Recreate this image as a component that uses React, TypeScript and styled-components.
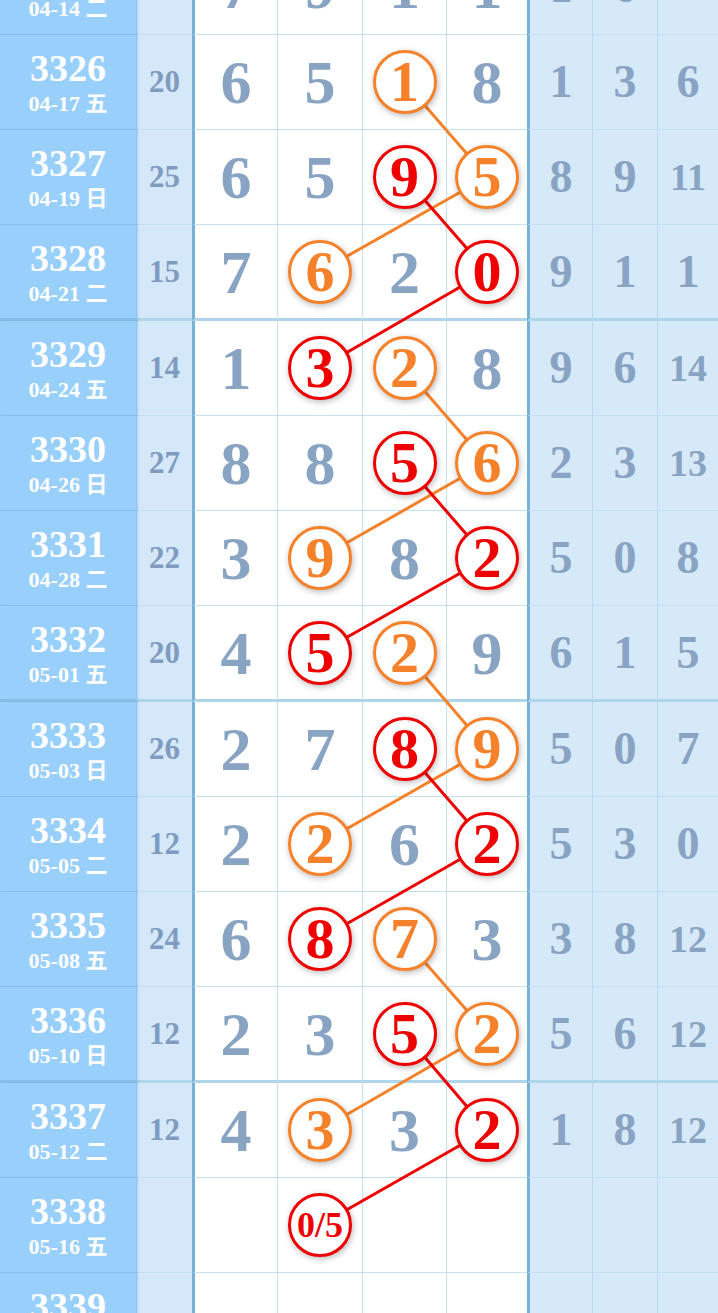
import React from "react";
import styled, { createGlobalStyle } from "styled-components";

const ORANGE = "#f5822a";
const RED = "#ee0000";
const SERIF = `"Liberation Serif", "Noto Sans CJK SC", serif`;

type Row = {
  no: string;
  date: string;
  sum: string;
  d: string[];
  r: string[];
  o?: number;
  x?: number;
};

const rows: Row[] = [
  { no: "3325", date: "04-14 二", sum: "", d: ["7", "9", "1", "1"], r: ["1", "6", "11"] },
  { no: "3326", date: "04-17 五", sum: "20", d: ["6", "5", "1", "8"], r: ["1", "3", "6"], o: 2 },
  { no: "3327", date: "04-19 日", sum: "25", d: ["6", "5", "9", "5"], r: ["8", "9", "11"], o: 3, x: 2 },
  { no: "3328", date: "04-21 二", sum: "15", d: ["7", "6", "2", "0"], r: ["9", "1", "1"], o: 1, x: 3 },
  { no: "3329", date: "04-24 五", sum: "14", d: ["1", "3", "2", "8"], r: ["9", "6", "14"], o: 2, x: 1 },
  { no: "3330", date: "04-26 日", sum: "27", d: ["8", "8", "5", "6"], r: ["2", "3", "13"], o: 3, x: 2 },
  { no: "3331", date: "04-28 二", sum: "22", d: ["3", "9", "8", "2"], r: ["5", "0", "8"], o: 1, x: 3 },
  { no: "3332", date: "05-01 五", sum: "20", d: ["4", "5", "2", "9"], r: ["6", "1", "5"], o: 2, x: 1 },
  { no: "3333", date: "05-03 日", sum: "26", d: ["2", "7", "8", "9"], r: ["5", "0", "7"], o: 3, x: 2 },
  { no: "3334", date: "05-05 二", sum: "12", d: ["2", "2", "6", "2"], r: ["5", "3", "0"], o: 1, x: 3 },
  { no: "3335", date: "05-08 五", sum: "24", d: ["6", "8", "7", "3"], r: ["3", "8", "12"], o: 2, x: 1 },
  { no: "3336", date: "05-10 日", sum: "12", d: ["2", "3", "5", "2"], r: ["5", "6", "12"], o: 3, x: 2 },
  { no: "3337", date: "05-12 二", sum: "12", d: ["4", "3", "3", "2"], r: ["1", "8", "12"], o: 1, x: 3 },
  { no: "3338", date: "05-16 五", sum: "", d: ["", "0/5", "", ""], r: ["", "", ""], x: 1 },
  { no: "3339", date: "05-19 日", sum: "", d: ["", "", "", ""], r: ["", "", ""] },
];

// [rowA, colA, rowB, colB, colour]
const links: [number, number, number, number, string][] = [
  [1, 2, 2, 3, ORANGE],
  [2, 3, 3, 1, ORANGE],
  [4, 2, 5, 3, ORANGE],
  [5, 3, 6, 1, ORANGE],
  [7, 2, 8, 3, ORANGE],
  [8, 3, 9, 1, ORANGE],
  [10, 2, 11, 3, ORANGE],
  [11, 3, 12, 1, ORANGE],
  [2, 2, 3, 3, RED],
  [3, 3, 4, 1, RED],
  [5, 2, 6, 3, RED],
  [6, 3, 7, 1, RED],
  [8, 2, 9, 3, RED],
  [9, 3, 10, 1, RED],
  [11, 2, 12, 3, RED],
  [12, 3, 13, 1, RED],
];

const DIGIT_X = [236, 320, 404.5, 487];
const isSep = (no: string) => Number(no) % 4 === 0;
const rowH = (no: string) => (isSep(no) ? 96 : 95);
const lineW = (no: string) => (isSep(no) ? 3 : 1);

const centers: number[] = [];
let acc = 0;
rows.forEach((row) => {
  centers.push(acc + (rowH(row.no) - lineW(row.no)) / 2);
  acc += rowH(row.no);
});

const Global = createGlobalStyle`
  body {
    margin: 0;
    background: #fff;
    overflow: hidden;
  }
`;

const Table = styled.div`
  position: relative;
  width: 718px;
  margin-top: -60px;
  font-family: ${SERIF};
`;

const RowLine = styled.div<{ $sep: boolean }>`
  display: grid;
  grid-template-columns: 137px 55px 85px 85px 84px 81px 65px 65px 61px;
  height: ${(p) => (p.$sep ? 96 : 95)}px;
`;

const Cell = styled.div<{ $sep: boolean }>`
  box-sizing: border-box;
  display: flex;
  align-items: center;
  justify-content: center;
  border-bottom: ${(p) => (p.$sep ? 3 : 1)}px solid
    ${(p) => (p.$sep ? "#afd5ea" : "#c4e1f1")};
`;

const IssueCell = styled(Cell)`
  flex-direction: column;
  gap: 5px;
  background: #98cffb;
  color: #fff;
  border-right: 1px solid #8cc5ef;
  border-bottom-color: ${(p) => (p.$sep ? "#86bfe6" : "#8cc5ee")};
  box-shadow: 1px 0 2px rgba(60, 120, 170, 0.25);
  position: relative;
  z-index: 0;
`;

const IssueNo = styled.div`
  font-size: 38px;
  line-height: 38px;
  font-weight: bold;
`;

const IssueDate = styled.div`
  font-size: 22px;
  line-height: 23px;
  font-weight: bold;
`;

const SumCell = styled(Cell)`
  background: #d5e8f9;
  color: #7f9cc0;
  font-size: 31px;
  font-weight: bold;
`;

const DigitCell = styled(Cell)<{ $first?: boolean }>`
  background: #fff;
  border-left: ${(p) => (p.$first ? "3px solid #78b1d6" : "1px solid #c6e2f1")};
  color: #89a3c3;
  font-size: 62px;
  font-weight: bold;
  line-height: 1;
`;

const StatCell = styled(Cell)<{ $first?: boolean; $wide?: boolean }>`
  background: #d6e9f9;
  border-left: ${(p) => (p.$first ? "3px solid #78b1d6" : "1px solid #b7daee")};
  color: #89a3c3;
  font-size: ${(p) => (p.$wide ? 38 : 46)}px;
  font-weight: bold;
  line-height: 1;
`;

const Ball = styled.div<{ $color: string; $small?: boolean }>`
  position: relative;
  z-index: 2;
  box-sizing: border-box;
  width: 64px;
  height: 64px;
  border-radius: 50%;
  border: 3px solid ${(p) => p.$color};
  background: #fff;
  box-shadow: 1px 2px 6px rgba(0, 0, 0, 0.28);
  color: ${(p) => p.$color};
  font-size: ${(p) => (p.$small ? 36 : 58)}px;
  font-weight: bold;
  line-height: 1;
  display: flex;
  align-items: center;
  justify-content: center;
`;

const Links = styled.svg`
  position: absolute;
  inset: 0;
  width: 100%;
  height: 100%;
  z-index: 1;
  pointer-events: none;
`;

export default function App() {
  return (
    <>
      <Global />
      <Table>
        {rows.map((row) => {
          const sep = isSep(row.no);
          return (
            <RowLine key={row.no} $sep={sep}>
              <IssueCell $sep={sep}>
                <IssueNo>{row.no}</IssueNo>
                <IssueDate>{row.date}</IssueDate>
              </IssueCell>
              <SumCell $sep={sep}>{row.sum}</SumCell>
              {row.d.map((v, i) => (
                <DigitCell key={i} $sep={sep} $first={i === 0}>
                  {row.o === i ? (
                    <Ball $color={ORANGE}>{v}</Ball>
                  ) : row.x === i ? (
                    <Ball $color={RED} $small={v.length > 1}>
                      {v}
                    </Ball>
                  ) : (
                    v
                  )}
                </DigitCell>
              ))}
              {row.r.map((v, i) => (
                <StatCell key={i} $sep={sep} $first={i === 0} $wide={v.length > 1}>
                  {v}
                </StatCell>
              ))}
            </RowLine>
          );
        })}
        <Links>
          {links.map(([ra, ca, rb, cb, color], i) => (
            <line
              key={i}
              x1={DIGIT_X[ca]}
              y1={centers[ra]}
              x2={DIGIT_X[cb]}
              y2={centers[rb]}
              stroke={color}
              strokeWidth={3}
            />
          ))}
        </Links>
      </Table>
    </>
  );
}
